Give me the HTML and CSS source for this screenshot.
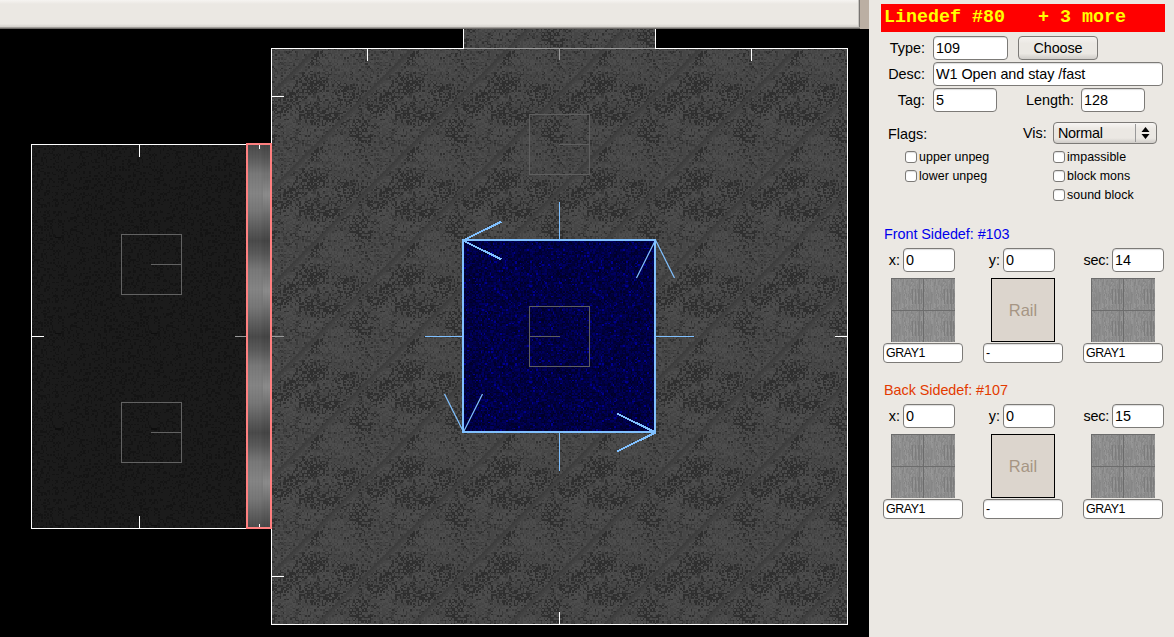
FILE: index.html
```
<!DOCTYPE html>
<html lang="en">
<head>
<meta charset="utf-8">
<title>Map Editor</title>
<link rel="stylesheet" href="styles.css">
</head>
<body>
<div class="app">
  <main class="workspace">
    <div class="menubar"></div>
    <div class="map">
      <canvas class="floor" id="floor" width="869" height="637"></canvas>
      <svg class="lines" viewBox="0 0 869 637" width="869" height="637" shape-rendering="crispEdges" fill="none">
        <g stroke="#626262">
          <path d="M121.5 234.5h60v60h-60zM151 264.5h30M121.5 402.5h60v60h-60zM151 432.5h30"/>
          <path stroke="#5f5f5f" d="M529.500 114.500h60v60h-60zM559 144.500h30M529.500 306.500h60v60h-60zM529 336.500h31"/>
        </g>
        <path stroke="#999" d="M463 48.500h193M559.500 48v12M235 336.500h12M272 336.500h12"/>
        <g stroke="#fff">
          <path d="M247 144.500H31.500V528.500H247M139.500 144v13M139.500 516v13M31 336.500h13"/>
          <path d="M463.500 28V48.500H271.500V144M655.500 28V48.500H847.500V624.500H271.500V528"/>
          <path d="M367.500 48v13M751.500 48v13M271 96.500h13M271 576.500h13M835 336.500h12M559.500 612v12M259.500 145v4M259.500 524v4"/>
        </g>
        <path stroke="#ff8080" stroke-width="2" d="M247 144h24v384h-24z"/>
        <g stroke="#80c0ff">
          <path stroke-width="2" d="M463 240h192v192H463z"/>
          <path d="M425 336.500h38M656 336.500h38M559.500 202v38M559.500 433v38"/>
          <path shape-rendering="auto" stroke-width="1.200" d="M655.500 240l-19 38M655.500 240l19 38M463.500 432l-19 -38M463.500 432l19 -38"/>
          <path stroke-width="2" d="M463 240.500l38.500 -19M463 240.500l38.500 19M655.500 432.500l-38.500 -19M655.500 432.500l-38.500 19"/>
        </g>
      </svg>
    </div>
  </main>

  <aside class="panel">
    <h1 class="title">Linedef #80 &nbsp; + 3 more</h1>
    <div class="row">
      <label class="label">Type:</label><input class="field w-type" value="109">
      <button class="choose">Choose</button>
    </div>
    <div class="row"><label class="label">Desc:</label><input class="field w-desc" value="W1 Open and stay /fast"></div>
    <div class="row">
      <label class="label">Tag:</label><input class="field w-num" value="5">
      <label class="label label-length">Length:</label><input class="field w-num" value="128">
    </div>
    <div class="flags-head">
      <span class="flags-label">Flags:</span><span class="vis">Vis:</span>
      <div class="select"><span>Normal</span>
        <svg class="arrows" width="21" height="18" viewBox="0 0 21 18"><path d="M.5 0v18" stroke="#999"/><path d="M10.500 3L14.500 8H6.500zM10.500 15L14.500 10H6.500z"/></svg>
      </div>
    </div>
    <div class="flags">
      <div class="checks">
        <label class="check"><i class="box"></i>upper unpeg</label>
        <label class="check"><i class="box"></i>lower unpeg</label>
      </div>
      <div class="checks">
        <label class="check"><i class="box"></i>impassible</label>
        <label class="check"><i class="box"></i>block mons</label>
        <label class="check"><i class="box"></i>sound block</label>
      </div>
    </div>

    <section class="sidedef">
      <h2 class="side-title front">Front Sidedef: #103</h2>
      <div class="side-grid">
        <div class="side-col">
          <div class="coord"><label>x:</label><input class="field w-coord" value="0"></div>
          <canvas class="tex" width="64" height="64"></canvas><input class="field name" value="GRAY1">
        </div>
        <div class="side-col">
          <div class="coord"><label>y:</label><input class="field w-coord" value="0"></div>
          <div class="rail">Rail</div><input class="field name" value="-">
        </div>
        <div class="side-col">
          <div class="coord sector"><label>sec:</label><input class="field w-coord" value="14"></div>
          <canvas class="tex" width="64" height="64"></canvas><input class="field name" value="GRAY1">
        </div>
      </div>
    </section>

    <section class="sidedef">
      <h2 class="side-title back">Back Sidedef: #107</h2>
      <div class="side-grid">
        <div class="side-col">
          <div class="coord"><label>x:</label><input class="field w-coord" value="0"></div>
          <canvas class="tex" width="64" height="64"></canvas><input class="field name" value="GRAY1">
        </div>
        <div class="side-col">
          <div class="coord"><label>y:</label><input class="field w-coord" value="0"></div>
          <div class="rail">Rail</div><input class="field name" value="-">
        </div>
        <div class="side-col">
          <div class="coord sector"><label>sec:</label><input class="field w-coord" value="15"></div>
          <canvas class="tex" width="64" height="64"></canvas><input class="field name" value="GRAY1">
        </div>
      </div>
    </section>
  </aside>
</div>
<script src="textures.js"></script>
</body>
</html>
```
FILE: styles.css
```
* { box-sizing: border-box; }
body { margin: 0; background: #ebe8e3; color: #000; font: 14.4px "Liberation Sans", Arial, sans-serif; overflow: hidden; }
.app { display: flex; width: 1174px; height: 637px; }

.workspace { position: relative; display: flex; flex-direction: column; width: 869px; background: #000; }
.menubar { position: relative; z-index: 1; height: 29px; border-right: 9px solid #bbafa3; background: linear-gradient(#f6f4f1, #ebe8e3 4px, #ebe8e3 24px, #d2cfca 27px, #6f6c69 28px) padding-box; }
.menubar::after { content: ""; position: absolute; top: 0; right: 0; width: 2px; height: 27px; background: linear-gradient(90deg, #c8c5c0 50%, #777471 50%); }
.map { flex: 1; }
.floor, .lines { position: absolute; left: 0; top: 0; display: block; }

.panel { width: 305px; padding: 4px 9px 0 12px; background: #ebe8e3; }
.title { margin: 0 0 4px; height: 28px; padding-left: 3px; background: #f00; color: #ff0; font: bold 18.33px/28px "Liberation Mono", monospace; white-space: pre; }
.row { display: flex; align-items: center; height: 24px; margin-bottom: 2px; }
.label { width: 52px; padding-right: 8px; text-align: right; }
.label-length { width: 84px; padding-right: 7px; }
.field { height: 24px; padding: 0 0 1px 2px; border: 1px solid #7c7a77; border-radius: 4px; background: #fff; box-shadow: inset 1px 2px 1px -1px #ddd; color: #000; font: inherit; outline: 0; }
.w-type { width: 75px; }
.w-desc { width: 230px; letter-spacing: -.05px; }
.w-num { width: 64px; }
.w-coord { width: 52px; }
.choose { width: 80px; height: 24px; margin-left: 10px; padding: 0 0 1px; border: 1px solid #7c7a77; border-radius: 4px; background: linear-gradient(#f4f2ef, #ebe8e3 30%, #ebe8e3 75%, #cfccc8); font: inherit; letter-spacing: -.1px; }

.flags-head { display: flex; align-items: center; height: 22px; margin-top: 10px; padding-left: 7px; }
.flags-label { width: 135px; padding-top: 2px; }
.vis { width: 30px; }
.select { display: flex; align-items: center; justify-content: space-between; width: 104px; height: 22px; padding: 0 0 0 4px; border: 1px solid #7c7a77; border-radius: 4px; background: linear-gradient(#f7f5f3, #ebe8e3 30%, #ebe8e3 75%, #cfccc8); letter-spacing: -.3px; }
.arrows { display: block; }
.flags { display: flex; justify-content: space-between; height: 74px; padding: 3px 9px 0 24px; }
.checks { width: 103px; }
.check { display: flex; align-items: center; height: 19px; font-size: 12.4px; letter-spacing: .06px; white-space: nowrap; }
.box { width: 12px; height: 12px; margin-right: 2px; border: 1px solid #7c7a77; border-radius: 3px; background: #fff; box-shadow: inset 0 1px 1px #ddd; }

.sidedef { height: 156px; padding-left: 2px; }
.side-title { margin: 0; padding: 8px 0 0 1px; height: 30px; font-size: 14.4px; font-weight: 400; line-height: 16px; letter-spacing: -.05px; }
.front { color: #0000ec; }
.back { color: #e33a00; }
.side-grid { display: flex; gap: 20px; }
.side-col { width: 80px; display: flex; flex-direction: column; align-items: center; }
.coord { display: flex; align-items: center; align-self: flex-start; gap: 3px; width: 72px; height: 24px; justify-content: flex-end; margin-bottom: 6px; }
.sector { width: 81px; gap: 3px; margin-right: -1px; letter-spacing: -.2px; }
.tex { display: block; width: 64px; height: 64px; }
.rail { width: 64px; height: 64px; border: 1px solid #000; background: #dcd5cd; color: #a69584; font-size: 16.500px; line-height: 63px; text-align: center; }
.name { width: 80px; height: 20px; margin-top: 1px; font-size: 12.400px; letter-spacing: -.4px; }
```
FILE: textures.js
```
// Small seeded generator so the flats look identical on every load.
function rng(seed) {
  return function () {
    seed = (seed + 0x6D2B79F5) | 0;
    let t = Math.imul(seed ^ (seed >>> 15), 1 | seed);
    t = (t + Math.imul(t ^ (t >>> 7), 61 | t)) ^ t;
    return ((t ^ (t >>> 14)) >>> 0) / 4294967296;
  };
}

function flat(seed, shade) {
  const c = document.createElement('canvas');
  c.width = c.height = 64;
  const g = c.getContext('2d');
  const r = rng(seed);
  for (let y = 0; y < 64; y++) {
    for (let x = 0; x < 64; x++) {
      g.fillStyle = shade(x, y, r);
      g.fillRect(x, y, 1, 1);
    }
  }
  return c;
}

const gray = v => 'rgb(' + v + ',' + v + ',' + v + ')';

// Darker and lighter patches of the rock flat: x, y, radius x, radius y in texels.
const patches = [[26, 24, 14, 10], [5, 40, 14, 8], [38, 46, 17, 8], [59, 56, 9, 13], [24, 42, 11, 7], [49, 31, 13, 10], [30, 4, 8, 7], [14, 31, 12, 6]];
const bright = [[12, 48, 8, 9], [45, 8, 14, 10], [27, 56, 11, 8], [8, 20, 9, 9], [41, 61, 8, 5], [38, 32, 6, 6]];
const near = (list, x, y) => list.reduce((best, p) => {
  const dx = Math.min(Math.abs(x - p[0]), 64 - Math.abs(x - p[0]));
  const dy = Math.min(Math.abs(y - p[1]), 64 - Math.abs(y - p[1]));
  return Math.max(best, 1 - Math.hypot(dx / p[2], dy / p[3]));
}, 0);

const rock = flat(7, (x, y, r) => {
  const d = (x + y - 28 + 64) % 64;
  const n = r();
  if (d < 2) return gray(61);
  if (d < 4) return gray(66);
  const dark = 0.07 + Math.min(0.5, near(patches, x, y) * 0.7);
  const light = near(bright, x, y);
  if (n < dark * (1 - light)) return gray(47);
  if (n < 0.2 + dark * 0.7 - light * 0.2) return gray(59);
  if (n < 0.76 - light * 0.4) return gray(70);
  return gray(77);
});

const dim = flat(21, (x, y, r) => {
  if (y === 61 && x > 14 && x < 19) return gray(14);
  return gray(r() < 0.26 ? 20 : 27);
});

const blue = flat(33, (x, y, r) => {
  const n = r();
  const b = n < 0.2 ? 42 : n < 0.5 ? 58 : n < 0.8 ? 75 : n < 0.97 ? 96 : 145;
  return 'rgb(0,0,' + b + ')';
});

const g = document.getElementById('floor').getContext('2d');
g.imageSmoothingEnabled = false;

function fill(tile, x, y, w, h, ox, oy) {
  g.save();
  g.beginPath();
  g.rect(x, y, w, h);
  g.clip();
  for (let ty = oy; ty < y + h; ty += 96) {
    for (let tx = ox; tx < x + w; tx += 96) g.drawImage(tile, tx, ty, 96, 96);
  }
  g.restore();
}

fill(rock, 464, 28, 192, 21, 368, -48);
fill(rock, 272, 49, 576, 576, 272, 48);
fill(dim, 32, 145, 216, 384, -64, 145);
fill(blue, 464, 241, 192, 192, 464, 240);

// The door: a lighting curve that repeats every 96 px.
const curve = [[0, 75], [12, 90], [28, 120], [48, 132], [66, 118], [84, 90], [96, 73]];
for (let y = 145; y < 528; y++) {
  const t = (y - 145) % 96;
  let i = 0;
  while (curve[i + 1][0] <= t) i++;
  const a = curve[i], b = curve[i + 1];
  const v = a[1] + (b[1] - a[1]) * (t - a[0]) / (b[0] - a[0]);
  for (let x = 248; x < 270; x++) {
    const glow = x > 262 ? Math.max(0, 18 - Math.abs(t - 50)) * 0.7 : 0;
    const edge = x > 261 ? -5 : 0;
    g.fillStyle = gray(Math.round(v + glow + edge + (x % 3 === 0 ? -3 : 0)));
    g.fillRect(x, y, 1, 1);
  }
}

// Sidedef preview: 32 px concrete panels with vertical streaks.
const previews = document.querySelectorAll('.tex');
previews.forEach(c => {
  const p = c.getContext('2d');
  const r = rng(5);
  for (let x = 0; x < 32; x++) {
    let v = 142;
    for (let y = 0; y < 32; y++) {
      if (r() < 0.35) v = 132 + Math.floor(r() * 20);
      const streak = x > 20 && y > 10 && y < 26 && x % 3 === 0;
      p.fillStyle = gray(x === 0 || y === 0 ? 108 : x === 28 ? 126 : streak ? 124 : v);
      p.fillRect(x, y, 1, 1);
      p.fillRect(x + 32, y, 1, 1);
      p.fillRect(x, y + 32, 1, 1);
      p.fillRect(x + 32, y + 32, 1, 1);
    }
  }
});
```
